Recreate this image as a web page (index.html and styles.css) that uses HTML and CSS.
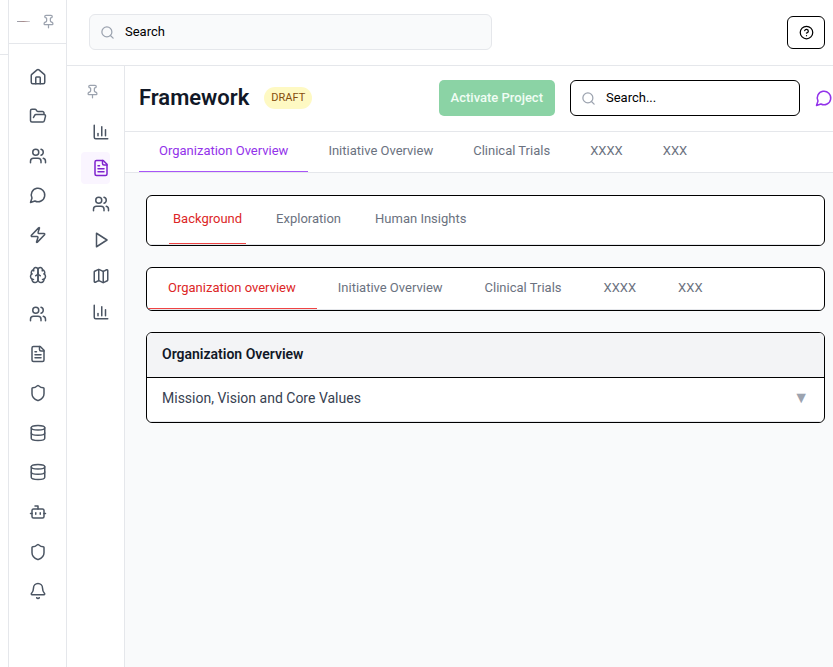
FILE: index.html
```html
<!DOCTYPE html>
<html lang="en">
<head>
<meta charset="utf-8">
<meta name="viewport" content="width=device-width, initial-scale=1">
<title>Framework</title>
<link rel="stylesheet" href="styles.css">
</head>
<body>
<svg class="sprite" aria-hidden="true">
  <symbol id="pin" viewBox="0 0 24 24"><path d="M12 17v5"/><path d="M9 10.76a2 2 0 0 1-1.11 1.79l-1.78.9A2 2 0 0 0 5 15.24V16a1 1 0 0 0 1 1h12a1 1 0 0 0 1-1v-.76a2 2 0 0 0-1.11-1.79l-1.78-.9A2 2 0 0 1 15 10.76V7a1 1 0 0 1 1-1 2 2 0 0 0 0-4H8a2 2 0 0 0 0 4 1 1 0 0 1 1 1z"/></symbol>
  <symbol id="house" viewBox="0 0 24 24"><path d="M15 21v-8a1 1 0 0 0-1-1h-4a1 1 0 0 0-1 1v8"/><path d="M3 10a2 2 0 0 1 .709-1.528l7-6a2 2 0 0 1 2.582 0l7 6A2 2 0 0 1 21 10v9a2 2 0 0 1-2 2H5a2 2 0 0 1-2-2z"/></symbol>
  <symbol id="folder" viewBox="0 0 24 24"><path d="m6 14 1.5-2.9A2 2 0 0 1 9.24 10H20a2 2 0 0 1 1.94 2.5l-1.54 6a2 2 0 0 1-1.95 1.5H4a2 2 0 0 1-2-2V5a2 2 0 0 1 2-2h3.9a2 2 0 0 1 1.69.9l.81 1.2a2 2 0 0 0 1.67.9H18a2 2 0 0 1 2 2v2"/></symbol>
  <symbol id="users" viewBox="0 0 24 24"><path d="M16 21v-2a4 4 0 0 0-4-4H6a4 4 0 0 0-4 4v2"/><circle cx="9" cy="7" r="4"/><path d="M22 21v-2a4 4 0 0 0-3-3.87"/><path d="M16 3.130a4 4 0 0 1 0 7.750"/></symbol>
  <symbol id="chat" viewBox="0 0 24 24"><path d="M7.9 20A9 9 0 1 0 4 16.1L2 22Z"/></symbol>
  <symbol id="zap" viewBox="0 0 24 24"><path d="M4 14a1 1 0 0 1-.78-1.63l9.9-10.2a.5.5 0 0 1 .86.46l-1.92 6.02A1 1 0 0 0 13 10h7a1 1 0 0 1 .78 1.63l-9.9 10.2a.5.5 0 0 1-.86-.46l1.92-6.02A1 1 0 0 0 11 14z"/></symbol>
  <symbol id="brain" viewBox="0 0 24 24"><path d="M12 5a3 3 0 1 0-5.997.125 4 4 0 0 0-2.526 5.77 4 4 0 0 0 .556 6.588A4 4 0 1 0 12 18Z"/><path d="M12 5a3 3 0 1 1 5.997.125 4 4 0 0 1 2.526 5.77 4 4 0 0 1-.556 6.588A4 4 0 1 1 12 18Z"/><path d="M15 13a4.5 4.5 0 0 1-3-4 4.5 4.5 0 0 1-3 4"/><path d="M17.599 6.5a3 3 0 0 0 .399-1.375"/><path d="M6.003 5.125A3 3 0 0 0 6.401 6.5"/><path d="M3.477 10.896a4 4 0 0 1 .585-.396"/><path d="M19.938 10.5a4 4 0 0 1 .585.396"/><path d="M6 18a4 4 0 0 1-1.967-.516"/><path d="M19.967 17.484A4 4 0 0 1 18 18"/></symbol>
  <symbol id="file" viewBox="0 0 24 24"><path d="M15 2H6a2 2 0 0 0-2 2v16a2 2 0 0 0 2 2h12a2 2 0 0 0 2-2V7Z"/><path d="M14 2v4a2 2 0 0 0 2 2h4"/><path d="M10 9H8"/><path d="M16 13H8"/><path d="M16 17H8"/></symbol>
  <symbol id="shield" viewBox="0 0 24 24"><path d="M20 13c0 5-3.5 7.5-7.66 8.95a1 1 0 0 1-.67-.01C7.5 20.5 4 18 4 13V6a1 1 0 0 1 1-1c2 0 4.5-1.2 6.24-2.72a1.17 1.17 0 0 1 1.52 0C14.51 3.81 17 5 19 5a1 1 0 0 1 1 1z"/></symbol>
  <symbol id="database" viewBox="0 0 24 24"><ellipse cx="12" cy="5" rx="9" ry="3"/><path d="M3 5v14a9 3 0 0 0 18 0V5"/><path d="M3 12a9 3 0 0 0 18 0"/></symbol>
  <symbol id="bot" viewBox="0 0 24 24"><path d="M12 8V4H8"/><rect width="16" height="12" x="4" y="8" rx="2"/><path d="M2 14h2"/><path d="M20 14h2"/><path d="M15 13v2"/><path d="M9 13v2"/></symbol>
  <symbol id="bell" viewBox="0 0 24 24"><path d="M10.268 21a2 2 0 0 0 3.464 0"/><path d="M3.262 15.326A1 1 0 0 0 4 17h16a1 1 0 0 0 .74-1.673C19.41 13.956 18 12.499 18 8A6 6 0 0 0 6 8c0 4.499-1.411 5.956-2.738 7.326"/></symbol>
  <symbol id="chart" viewBox="0 0 24 24"><path d="M3 3v16a2 2 0 0 0 2 2h16"/><path d="M18 17V9"/><path d="M13 17V5"/><path d="M8 17v-3"/></symbol>
  <symbol id="play" viewBox="0 0 24 24"><path d="m6 3 14 9-14 9z"/></symbol>
  <symbol id="map" viewBox="0 0 24 24"><path d="M14.106 5.553a2 2 0 0 0 1.788 0l3.659-1.83A1 1 0 0 1 21 4.619v12.764a1 1 0 0 1-.553.894l-4.553 2.277a2 2 0 0 1-1.788 0l-4.212-2.106a2 2 0 0 0-1.788 0l-3.659 1.83A1 1 0 0 1 3 19.381V6.618a1 1 0 0 1 .553-.894l4.553-2.277a2 2 0 0 1 1.788 0z"/><path d="M15 5.764v15"/><path d="M9 3.236v15"/></symbol>
  <symbol id="search" viewBox="0 0 24 24"><circle cx="11" cy="11" r="8"/><path d="m21 21-4.300-4.300"/></symbol>
  <symbol id="help" viewBox="0 0 24 24"><circle cx="12" cy="12" r="10"/><path d="M9.090 9a3 3 0 0 1 5.830 1c0 2-3 3-3 3"/><path d="M12 17h.01"/></symbol>
</svg>
<div class="app">
  <div class="edge"><div class="edge-top"></div></div>
  <aside class="sidebar">
    <div class="sidebar-head">
      <span class="logo"></span>
      <button class="icon-button muted" aria-label="Pin sidebar"><svg class="icon small"><use href="#pin"/></svg></button>
    </div>
    <nav class="main-nav" aria-label="Main">
      <a href="#" aria-label="Home"><svg class="icon"><use href="#house"/></svg></a>
      <a href="#" aria-label="Projects"><svg class="icon"><use href="#folder"/></svg></a>
      <a href="#" aria-label="Teams"><svg class="icon"><use href="#users"/></svg></a>
      <a href="#" aria-label="Messages"><svg class="icon"><use href="#chat"/></svg></a>
      <a href="#" aria-label="Actions"><svg class="icon"><use href="#zap"/></svg></a>
      <a href="#" aria-label="Insights"><svg class="icon"><use href="#brain"/></svg></a>
      <a href="#" aria-label="People"><svg class="icon"><use href="#users"/></svg></a>
      <a href="#" aria-label="Documents"><svg class="icon"><use href="#file"/></svg></a>
      <a href="#" aria-label="Security"><svg class="icon"><use href="#shield"/></svg></a>
      <a href="#" aria-label="Data"><svg class="icon"><use href="#database"/></svg></a>
      <a href="#" aria-label="Storage"><svg class="icon"><use href="#database"/></svg></a>
      <a href="#" aria-label="Assistant"><svg class="icon"><use href="#bot"/></svg></a>
      <a href="#" aria-label="Permissions"><svg class="icon"><use href="#shield"/></svg></a>
      <a href="#" aria-label="Notifications"><svg class="icon"><use href="#bell"/></svg></a>
    </nav>
  </aside>
  <div class="workspace">
    <header class="topbar">
      <label class="search global">
        <svg class="icon small"><use href="#search"/></svg>
        <input type="search" placeholder="Search" aria-label="Search">
      </label>
      <button class="help" aria-label="Help"><svg class="icon small"><use href="#help"/></svg></button>
    </header>
    <div class="body">
      <aside class="subnav">
        <button class="icon-button muted" aria-label="Pin project menu"><svg class="icon small"><use href="#pin"/></svg></button>
        <nav class="project-nav" aria-label="Project">
          <a href="#" aria-label="Dashboard"><svg class="icon"><use href="#chart"/></svg></a>
          <a href="#" class="current" aria-label="Framework"><svg class="icon"><use href="#file"/></svg></a>
          <a href="#" aria-label="Stakeholders"><svg class="icon"><use href="#users"/></svg></a>
          <a href="#" aria-label="Run"><svg class="icon"><use href="#play"/></svg></a>
          <a href="#" aria-label="Map"><svg class="icon"><use href="#map"/></svg></a>
          <a href="#" aria-label="Reports"><svg class="icon"><use href="#chart"/></svg></a>
        </nav>
      </aside>
      <main class="content">
        <header class="page-head">
          <h1>Framework</h1>
          <span class="badge">DRAFT</span>
          <button class="activate" disabled>Activate Project</button>
          <label class="search local">
            <svg class="icon small"><use href="#search"/></svg>
            <input type="search" placeholder="Search..." aria-label="Search this project">
          </label>
          <button class="icon-button accent" aria-label="Comments"><svg class="icon"><use href="#chat"/></svg></button>
        </header>
        <nav class="tabs page-tabs" aria-label="Sections">
          <a href="#" class="active">Organization Overview</a>
          <a href="#">Initiative Overview</a>
          <a href="#">Clinical Trials</a>
          <a href="#">XXXX</a>
          <a href="#">XXX</a>
        </nav>
        <div class="cards">
          <div class="card">
            <nav class="tabs stage-tabs" aria-label="Stages">
              <a href="#" class="active">Background</a>
              <a href="#">Exploration</a>
              <a href="#">Human Insights</a>
            </nav>
          </div>
          <div class="card">
            <nav class="tabs topic-tabs" aria-label="Topics">
              <a href="#" class="active">Organization overview</a>
              <a href="#">Initiative Overview</a>
              <a href="#">Clinical Trials</a>
              <a href="#">XXXX</a>
              <a href="#">XXX</a>
            </nav>
          </div>
          <section class="card">
            <h2>Organization Overview</h2>
            <button class="row" aria-expanded="false"><span>Mission, Vision and Core Values</span><span class="caret">▼</span></button>
          </section>
        </div>
      </main>
    </div>
  </div>
</div>
</body>
</html>
```
FILE: styles.css
```css
:root {
  --line: #e5e7eb;
  --page: #f9fafb;
  --slate: #4b5563;
  --gray: #6b7280;
  --muted: #9ca3af;
  --purple: #9333ea;
  --red: #dc2626;
}

* { box-sizing: border-box; }

body {
  margin: 0;
  background: #fff;
  color: #111827;
  font: 13px/18px Roboto, "Liberation Sans", sans-serif;
}

a { color: inherit; text-decoration: none; }

button, input { font: inherit; color: inherit; }

button { padding: 0; border: 0; background: none; }

.sprite { display: none; }

.icon {
  display: block;
  flex: none;
  width: 18px;
  height: 18px;
  fill: none;
  stroke: currentColor;
  stroke-width: 2;
  stroke-linecap: round;
  stroke-linejoin: round;
}

.icon.small { width: 15px; height: 15px; }

.icon-button { display: flex; }

.muted { color: var(--muted); }

.accent { color: var(--purple); }

.app { display: flex; min-height: 100vh; }

.edge { flex: none; width: 9px; border-right: 1px solid var(--line); }

.edge-top { height: 55px; border-bottom: 1px solid var(--line); }

.sidebar {
  display: flex;
  flex: none;
  flex-direction: column;
  width: 58px;
  border-right: 1px solid var(--line);
}

.sidebar-head {
  display: flex;
  align-items: center;
  justify-content: space-between;
  height: 44px;
  padding: 0 10px 0 8px;
  border-bottom: 1px solid var(--line);
}

.logo { width: 13px; height: 1px; background: linear-gradient(90deg, #9ca3af, #a78b8b, #d1d5db); }

.main-nav {
  display: grid;
  flex: 1;
  grid-auto-rows: minmax(36px, 1fr);
  padding: 13px 0 56px;
  color: var(--slate);
}

.main-nav a { display: grid; place-items: center; }

.workspace { display: flex; flex: 1; flex-direction: column; min-width: 0; }

.topbar {
  display: flex;
  align-items: center;
  justify-content: space-between;
  gap: 16px;
  height: 66px;
  padding: 0 8px 1px 22px;
  border-bottom: 1px solid var(--line);
}

.search {
  display: flex;
  align-items: center;
  height: 36px;
  padding: 0 10px;
  gap: 10px;
  border: 1px solid #000;
  border-radius: 6px;
}

.search .icon { color: var(--muted); }

.search input {
  flex: 1;
  min-width: 0;
  padding: 0;
  border: 0;
  outline: 0;
  background: none;
}

.search input::placeholder { color: #000; opacity: 1; }

.search.global { flex: 0 1 403px; border-color: var(--line); background: var(--page); }

.search.local { flex: 0 1 230px; min-width: 120px; }

.help {
  display: grid;
  place-items: center;
  width: 38px;
  height: 33px;
  border: 1px solid #000;
  border-radius: 6px;
  color: #000;
}

.body { display: flex; flex: 1; }

.subnav {
  flex: none;
  width: 58px;
  padding: 18px 14px 0;
  border-right: 1px solid var(--line);
}

.subnav .icon-button { padding-left: 4px; }

.project-nav { display: grid; gap: 4px; margin-top: 17px; color: var(--slate); }

.project-nav a {
  display: grid;
  align-items: center;
  justify-content: end;
  height: 32px;
  border-radius: 4px;
}

.project-nav .current { background: #faf5ff; color: #7e22ce; }

.content { flex: 1; min-width: 0; background: var(--page); }

.page-head {
  display: flex;
  align-items: center;
  gap: 15px;
  height: 66px;
  padding: 0 0 1px 14px;
  border-bottom: 1px solid var(--line);
  background: #fff;
}

h1 { margin: 0; font-size: 22px; line-height: 28px; font-weight: 600; }

.badge {
  padding: 2px 7px;
  border-radius: 11px;
  background: #fef9c3;
  color: #854d0e;
  font-size: 11px;
}

.activate {
  height: 36px;
  margin-left: auto;
  padding: 0 12px;
  border-radius: 5px;
  background: #8bd3a5;
  color: #f0fdf4;
  font-weight: 500;
  white-space: nowrap;
}

.tabs { display: flex; border-bottom: 1px solid var(--line); color: var(--gray); white-space: nowrap; }

.tabs a { border-bottom: 1px solid transparent; }

.tabs .active { border-color: #ef4444; color: var(--red); }

.page-tabs { padding: 0 14px; background: #fff; }

.page-tabs a { padding: 10px 20px 11px; }

.page-tabs .active { border-color: #a855f7; color: var(--purple); }

.cards { display: grid; gap: 21px; padding: 22px 8px 22px 21px; }

.card { overflow: hidden; border: 1px solid #000; border-radius: 6px; background: #fff; }

.stage-tabs { gap: 26px; padding: 0 22px; }

.stage-tabs a { padding: 14px 4px 15px; }

.topic-tabs a { padding: 11px 21px; }

h2 {
  margin: 0;
  padding: 11px 15px 13px;
  border-bottom: 1px solid #000;
  background: #f3f4f6;
  font-size: 14px;
  line-height: 20px;
  font-weight: 600;
}

.row {
  display: flex;
  align-items: center;
  justify-content: space-between;
  width: 100%;
  padding: 10px 15px 13px;
  border-bottom: 1px solid var(--line);
  color: #374151;
  font-size: 14px;
  line-height: 20px;
  text-align: left;
}

.caret { color: var(--muted); font-size: 16px; }
```
